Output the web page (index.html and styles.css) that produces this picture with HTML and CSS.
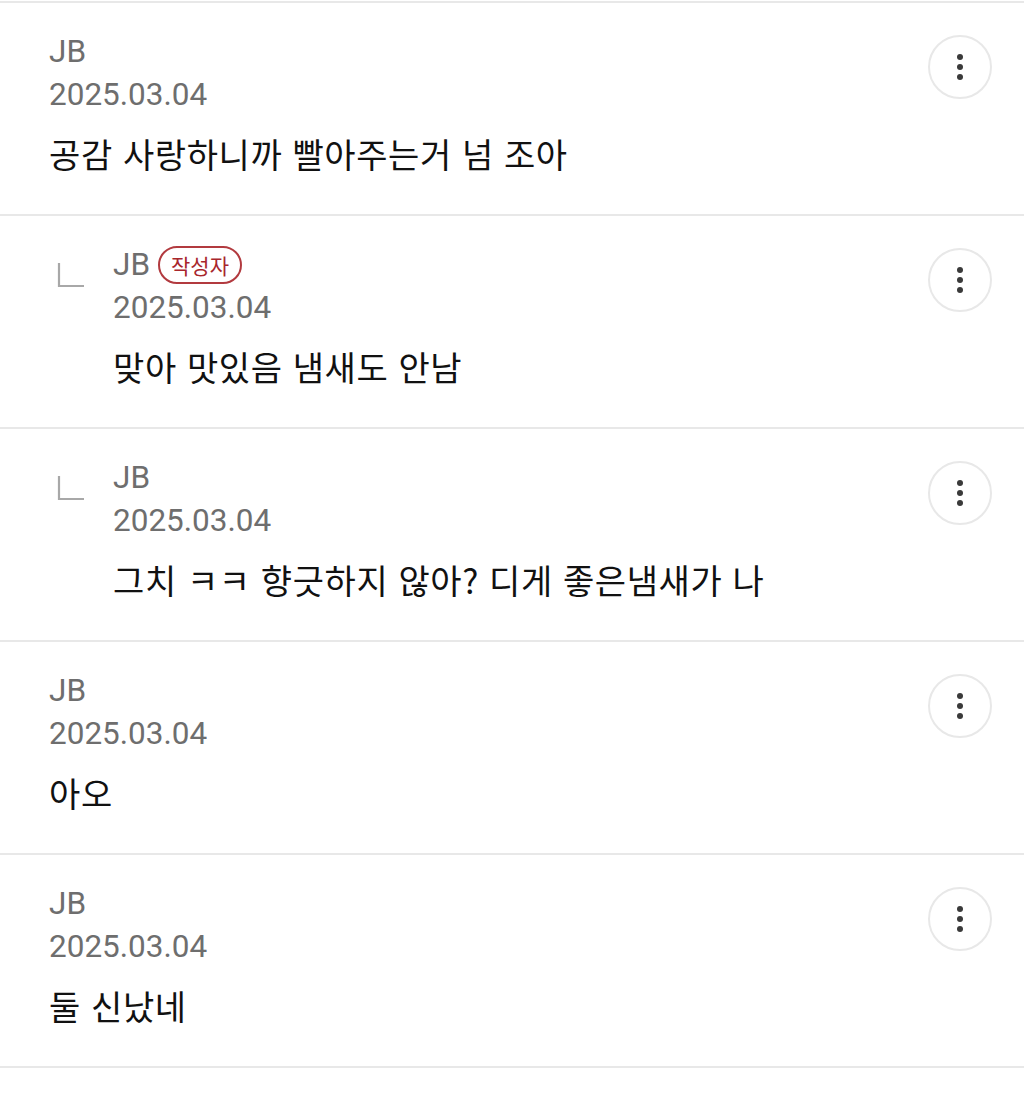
FILE: index.html
```html
<!DOCTYPE html>
<html lang="ko">
<head>
	<meta charset="UTF-8" />
	<title>댓글</title>
	<link rel="stylesheet" href="styles.css">
</head>
<body>
<ul class="comments">
	<li class="item">
		<div class="body">
			<p class="name">JB</p>
			<p class="date">2025.03.04</p>
			<p class="text">공감 사랑하니까 빨아주는거 넘 조아</p>
		</div>
		<a href="#" class="more"><i></i><i></i><i></i></a>
	</li>
	<li class="item reply">
		<span class="mark"><svg width="28" height="26" viewBox="0 0 28 26"><path d="M2 1V24H27" fill="none" stroke="#a8a8a8" stroke-width="2.2"/></svg></span>
		<div class="body">
			<p class="name">JB <span class="badge">작성자</span></p>
			<p class="date">2025.03.04</p>
			<p class="text">맞아 맛있음 냄새도 안남</p>
		</div>
		<a href="#" class="more"><i></i><i></i><i></i></a>
	</li>
	<li class="item reply">
		<span class="mark"><svg width="28" height="26" viewBox="0 0 28 26"><path d="M2 1V24H27" fill="none" stroke="#a8a8a8" stroke-width="2.2"/></svg></span>
		<div class="body">
			<p class="name">JB</p>
			<p class="date">2025.03.04</p>
			<p class="text">그치 ㅋㅋ 향긋하지 않아? 디게 좋은냄새가 나</p>
		</div>
		<a href="#" class="more"><i></i><i></i><i></i></a>
	</li>
	<li class="item">
		<div class="body">
			<p class="name">JB</p>
			<p class="date">2025.03.04</p>
			<p class="text">아오</p>
		</div>
		<a href="#" class="more"><i></i><i></i><i></i></a>
	</li>
	<li class="item">
		<div class="body">
			<p class="name">JB</p>
			<p class="date">2025.03.04</p>
			<p class="text">둘 신났네</p>
		</div>
		<a href="#" class="more"><i></i><i></i><i></i></a>
	</li>
</ul>
</body>
</html>
```

FILE: styles.css
```css
body{margin:0;background:#fff;font-family:Roboto,"Noto Sans CJK KR",sans-serif;}
p{margin:0;}
.comments{list-style:none;margin:1px 0 0;padding:0;border-top:2px solid #e8e8e8;}
.item{display:flex;align-items:flex-start;height:211px;padding:0 32px 0 49px;border-bottom:2px solid #e8e8e8;}
.item .body{flex:1;padding-top:27px;}
.name,.date{font-size:31.5px;line-height:43px;color:#6e6e6e;}
.name{display:flex;align-items:center;}
.badge{display:inline-block;margin-left:8px;height:34px;padding:0 11px;border:2px solid #b23a3f;border-radius:19px;color:#a8262c;font:21px/34px "Noto Sans CJK KR",sans-serif;}
.text{margin-top:15px;font:34px/46px "Noto Sans CJK KR",sans-serif;letter-spacing:0.6px;color:#111;}
.mark{width:64px;flex:none;padding-top:46px;}
.mark svg{display:block;margin-left:8px;}
a.more{flex:none;display:flex;flex-direction:column;align-items:center;justify-content:center;gap:4px;width:60px;height:60px;margin-top:32px;border:2px solid #e8e8e8;border-radius:50%;}
a.more i{display:block;width:6px;height:6px;border-radius:50%;background:#3a3a3a;}
```
